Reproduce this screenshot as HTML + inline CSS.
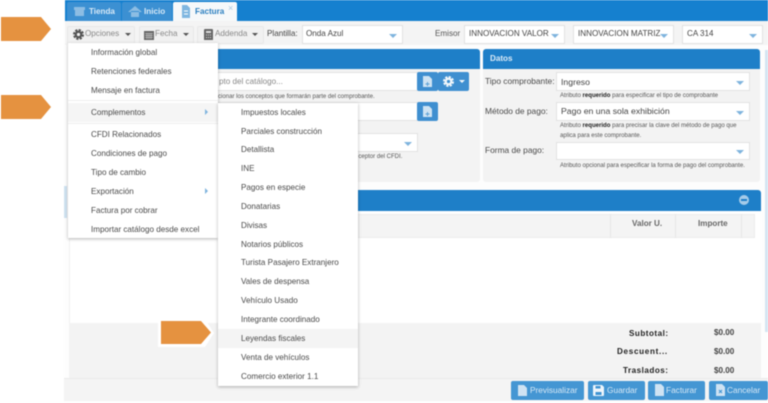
<!DOCTYPE html>
<html><head><meta charset="utf-8"><style>
html,body{margin:0;padding:0;background:#fff;width:768px;height:403px;overflow:hidden}
#r{position:relative;width:768px;height:403px;overflow:hidden;filter:blur(.5px);font-family:"Liberation Sans",sans-serif;font-size:8.1px;color:#444}
#r div,#r svg{position:absolute;box-sizing:border-box}
.t{white-space:nowrap;line-height:12px}
.btn{background:#f1f1f1;border:1px solid #e8e8e8;border-radius:2px}
.inp{background:#fff;border:1px solid #e2e2e2}
.sel{background:#fff;border:1px solid #e2e2e2}
.sel:after{content:"";position:absolute;right:5px;top:50%;margin-top:-1px;border:4px solid transparent;border-top:4px solid #7fb4de;border-bottom:0}
.h{background:#1e7fc8;color:#e4eff8;border-radius:3px 3px 0 0}
.mi{left:23px;margin-top:1px;white-space:nowrap;line-height:12px;color:#4a4a4a;font-size:8.1px}
.sm{font-size:6.05px;color:#555;white-space:nowrap;line-height:8px}
.bb{background:#4496d3;border-radius:2px;color:#d8e9f6;top:381px;height:19px;font-size:8.3px;line-height:19px}
.caret{width:0;height:0;border:3px solid transparent;border-top:3px solid #555;border-bottom:0}
.ar{background:#e59240;clip-path:polygon(0 0,80% 0,100% 50%,80% 100%,0 100%)}
.ib{background:#3f8fd0;border-radius:2px}
.lb{font-size:8.4px;color:#4a4a4a}
.v{font-size:8.7px;color:#444}
</style></head><body><div id="r">
<div style="left:64px;top:0;width:704px;height:402px;background:#fdfdfd"></div>
<div style="left:64px;top:186px;width:3px;height:32px;background:#cfe2f1"></div>
<div style="left:65px;top:0;width:703px;height:21px;background:#1580cf"></div>
<div style="left:65px;top:21px;width:703px;height:24px;background:#f4f4f4"></div>
<!-- tabs -->
<div style="left:67px;top:2px;width:54px;height:19px;background:#3c90d2;border-radius:2px 2px 0 0"></div>
<div style="left:122px;top:2px;width:50px;height:19px;background:#3c90d2;border-radius:2px 2px 0 0"></div>
<div style="left:173px;top:2px;width:64px;height:19px;background:#f6f8fa;border-radius:2px 2px 0 0"></div>
<svg style="left:73px;top:6px" width="13" height="11" viewBox="0 0 13 11"><path d="M1 1h11v3H1zM2 4h9v6H2z" fill="#8dbde3"/></svg>
<svg style="left:128px;top:6px" width="14" height="11" viewBox="0 0 14 11"><path d="M0 6L7 0l7 6M3 5v6h8V5" fill="#8dbde3"/></svg>
<svg style="left:181px;top:5px" width="10" height="13" viewBox="0 0 10 13"><path d="M1 0h5l3 3v10H1z" fill="#7fb6e0"/><path d="M3 6h4M3 9h4" stroke="#fff"/></svg>
<div class="t" style="left:89px;top:6px;color:#d9eaf7;font-weight:bold">Tienda</div>
<div class="t" style="left:144px;top:6px;color:#d9eaf7;font-weight:bold">Inicio</div>
<div class="t" style="left:195px;top:6px;color:#2b7fc0;font-weight:bold">Factura</div>
<div class="t" style="left:228px;top:2px;color:#a9c9e2;font-size:9px">×</div>
<!-- toolbar -->
<div class="btn" style="left:67px;top:26px;width:68px;height:18px"></div>
<div class="btn" style="left:139px;top:26px;width:55px;height:18px"></div>
<div class="btn" style="left:197px;top:26px;width:67px;height:18px"></div>
<svg style="left:73px;top:29px" width="11" height="11" viewBox="0 0 24 24"><circle cx="12" cy="12" r="6" fill="none" stroke="#555" stroke-width="5"/><circle cx="12" cy="12" r="10" fill="none" stroke="#555" stroke-width="4" stroke-dasharray="5 2.850"/></svg>
<div class="t" style="left:85px;top:28px;color:#888">Opciones</div>
<div class="caret" style="left:125px;top:33px"></div>
<svg style="left:144px;top:29px" width="10" height="11" viewBox="0 0 10 11"><path d="M0 2h10v9H0z" fill="#666"/><path d="M1 4.500h8M1 6.500h8M1 8.500h8M3 4v6M5 4v6M7 4v6" stroke="#ddd" stroke-width=".5"/></svg>
<div class="t" style="left:155px;top:28px;color:#888">Fecha</div>
<div class="caret" style="left:183px;top:33px"></div>
<svg style="left:204px;top:29px" width="9" height="11" viewBox="0 0 9 11"><path d="M0 1q0-1 1-1h7q1 0 1 1v10H0z" fill="#666"/><path d="M2 2h5v2H2z" fill="#ddd"/><path d="M2 6h5M2 8.500h5" stroke="#ddd" stroke-dasharray="1 1"/></svg>
<div class="t" style="left:215px;top:28px;color:#888">Addenda</div>
<div class="caret" style="left:252px;top:33px"></div>
<div class="t" style="left:267px;top:28px;color:#444">Plantilla:</div>
<div class="sel" style="left:302px;top:25px;width:101px;height:19px"></div>
<div class="t" style="left:306px;top:28px">Onda Azul</div>
<div class="t" style="left:435px;top:28px;color:#555">Emisor</div>
<div class="sel" style="left:464px;top:25px;width:101px;height:19px"></div>
<div class="t" style="left:469px;top:28px">INNOVACION VALOR</div>
<div class="sel" style="left:573px;top:25px;width:101px;height:19px"></div>
<div class="t" style="left:578px;top:28px">INNOVACION MATRIZ</div>
<div class="sel" style="left:682px;top:25px;width:81px;height:19px"></div>
<div class="t" style="left:687px;top:28px">CA 314</div>
<!-- panels -->
<div style="left:70px;top:49px;width:410px;height:133px;background:#f3f3f3;border-radius:3px"></div>
<div class="h" style="left:70px;top:49px;width:410px;height:20px"></div>
<div style="left:483px;top:49px;width:277px;height:133px;background:#f3f3f3;border-radius:3px"></div>
<div class="h" style="left:483px;top:49px;width:277px;height:20px"></div>
<div class="t" style="left:490px;top:53px;font-weight:bold;color:#dcebf7">Datos</div>
<div class="inp" style="left:200px;top:72px;width:218px;height:19px"></div>
<div class="t" style="left:219px;top:76px;color:#888">pto del catálogo...</div>
<div class="ib" style="left:417px;top:72px;width:21px;height:19px"></div>
<div class="ib" style="left:438px;top:72px;width:31px;height:19px"></div>
<svg style="left:423px;top:76px" width="9" height="11" viewBox="0 0 9 11"><path d="M0 0h6l3 3v8H0z" fill="#cfe3f3"/><path d="M2.500 8h4M4.500 6v4" stroke="#5ba0d6"/></svg>
<svg style="left:443px;top:76px" width="11" height="11" viewBox="0 0 24 24"><circle cx="12" cy="12" r="6" fill="none" stroke="#f2f7fb" stroke-width="5"/><circle cx="12" cy="12" r="10" fill="none" stroke="#f2f7fb" stroke-width="4" stroke-dasharray="5 2.850"/></svg>
<div class="caret" style="left:459px;top:80px;border-top-color:#f2f7fb"></div>
<div class="sm" style="left:218px;top:93px">cionar los conceptos que formarán parte del comprobante.</div>
<div class="inp" style="left:200px;top:102px;width:218px;height:19px"></div>
<div class="ib" style="left:417px;top:102px;width:21px;height:19px"></div>
<svg style="left:423px;top:106px" width="9" height="11" viewBox="0 0 9 11"><path d="M0 0h6l3 3v8H0z" fill="#cfe3f3"/><path d="M2.500 8h4M4.500 6v4" stroke="#5ba0d6"/></svg>
<div class="sel" style="left:200px;top:133px;width:218px;height:19px"></div>
<div class="sm" style="left:353px;top:153px">receptor del CFDI.</div>
<!-- datos -->
<div class="t lb" style="left:485px;top:75px">Tipo comprobante:</div>
<div class="sel" style="left:556px;top:72px;width:194px;height:19px"></div>
<div class="t v" style="left:561px;top:76px">Ingreso</div>
<div class="sm" style="left:560px;top:92px">Atributo <b style="color:#222">requerido</b> para especificar el tipo de comprobante</div>
<div class="t lb" style="left:485px;top:105px">Método de pago:</div>
<div class="sel" style="left:556px;top:102px;width:194px;height:19px"></div>
<div class="t v" style="left:561px;top:105px">Pago en una sola exhibición</div>
<div class="sm" style="left:560px;top:122px">Atributo <b style="color:#222">requerido</b> para precisar la clave del método de pago que</div>
<div class="sm" style="left:560px;top:132px">aplica para este comprobante.</div>
<div class="t lb" style="left:485px;top:144px">Forma de pago:</div>
<div class="sel" style="left:556px;top:142px;width:194px;height:18px"></div>
<div class="sm" style="left:560px;top:162px">Atributo opcional para especificar la forma de pago del comprobante.</div>
<!-- conceptos -->
<div class="h" style="left:69px;top:190px;width:692px;height:21px"></div>
<div style="left:739px;top:195px;width:10px;height:10px;border-radius:50%;background:#a5cbe9"></div>
<div style="left:741px;top:199px;width:6px;height:2px;background:#1e7fc8"></div>
<div style="left:69px;top:211px;width:692px;height:112px;background:#fff;border-left:1px solid #f1f1f1"></div>
<div style="left:70px;top:214px;width:685px;height:24px;background:#f4f4f4;border:1px solid #ececec"></div>
<div style="left:610px;top:214px;width:1px;height:24px;background:#e6e6e6"></div>
<div style="left:675px;top:214px;width:1px;height:24px;background:#e6e6e6"></div>
<div style="left:741px;top:214px;width:1px;height:24px;background:#e6e6e6"></div>
<div class="t" style="left:632px;top:218px;font-weight:bold;color:#666">Valor U.</div>
<div class="t" style="left:698px;top:218px;font-weight:bold;color:#666">Importe</div>
<div style="left:69px;top:323px;width:692px;height:55px;background:#f3f3f3"></div>
<div style="left:64px;top:378px;width:704px;height:23px;background:#f4f4f4;border-top:1px solid #ebebeb"></div>
<div class="t" style="left:629px;top:328px;font-weight:bold;color:#222;letter-spacing:.5px">Subtotal:</div>
<div class="t" style="left:617px;top:346px;font-weight:bold;color:#222;letter-spacing:.7px">Descuent...</div>
<div class="t" style="left:623px;top:365px;font-weight:bold;color:#222;letter-spacing:.5px">Traslados:</div>
<div class="t" style="left:714px;top:327px;font-weight:bold;color:#444">$0.00</div>
<div class="t" style="left:714px;top:346px;font-weight:bold;color:#444">$0.00</div>
<div class="t" style="left:714px;top:365px;font-weight:bold;color:#444">$0.00</div>
<!-- bottom buttons -->
<div class="bb" style="left:511px;width:73px;padding-left:19px">Previsualizar</div>
<div class="bb" style="left:588px;width:57px;padding-left:19px">Guardar</div>
<div class="bb" style="left:648px;width:57px;padding-left:18px">Facturar</div>
<div class="bb" style="left:709px;width:59px;padding-left:18px">Cancelar</div>
<svg style="left:518px;top:385px" width="9" height="11" viewBox="0 0 9 11"><path d="M0 0h6l3 3v8H0z" fill="#cfe3f3"/></svg>
<svg style="left:593px;top:385px" width="11" height="11" viewBox="0 0 11 11"><path d="M0 1q0-1 1-1h8l2 2v8q0 1-1 1H1q-1 0-1-1z" fill="#eef5fb"/><path d="M2.500 1h5v2.500h-5zM2.500 7h6v3h-6z" fill="#3f93d2"/></svg>
<svg style="left:655px;top:384px" width="9" height="12" viewBox="0 0 9 12"><path d="M0 0h6l3 3v9H0z" fill="#cfe3f3"/></svg>
<svg style="left:716px;top:384px" width="9" height="12" viewBox="0 0 9 12"><path d="M0 0h6l3 3v9H0z" fill="#cfe3f3"/><path d="M3 6l3 3M6 6l-3 3" stroke="#3f93d2"/></svg>
<!-- scrollbar -->
<div style="left:765px;top:50px;width:3px;height:282px;background:#d5e5f2"></div>
<!-- menu -->
<div style="left:68px;top:43px;width:150px;height:195px;background:#fff;box-shadow:0 1px 3px rgba(0,0,0,.3)">
<div class="mi" style="top:3px">Información global</div>
<div class="mi" style="top:22px">Retenciones federales</div>
<div class="mi" style="top:41px">Mensaje en factura</div>
<div style="left:0;top:57px;width:150px;height:1px;background:#eee"></div>
<div style="left:0;top:60px;width:150px;height:19px;background:#f5f5f5"></div>
<div class="mi" style="top:63px">Complementos</div>
<div style="left:137px;top:66px;width:0;height:0;border:3px solid transparent;border-left:3px solid #7fb4de;border-right:0"></div>
<div style="left:0;top:80px;width:150px;height:1px;background:#eee"></div>
<div class="mi" style="top:85px">CFDI Relacionados</div>
<div class="mi" style="top:104px">Condiciones de pago</div>
<div class="mi" style="top:123px">Tipo de cambio</div>
<div class="mi" style="top:142px">Exportación</div>
<div style="left:137px;top:145px;width:0;height:0;border:3px solid transparent;border-left:3px solid #7fb4de;border-right:0"></div>
<div class="mi" style="top:161px">Factura por cobrar</div>
<div class="mi" style="top:180px">Importar catálogo desde excel</div>
</div>
<!-- submenu -->
<div style="left:218px;top:103px;width:140px;height:283px;background:#fff;box-shadow:0 1px 3px rgba(0,0,0,.3)">
<div style="left:0;top:226px;width:140px;height:19px;background:#f4f4f4"></div>
<div class="mi" style="top:3px">Impuestos locales</div>
<div class="mi" style="top:22px">Parciales construcción</div>
<div class="mi" style="top:40px">Detallista</div>
<div class="mi" style="top:59px">INE</div>
<div class="mi" style="top:78px">Pagos en especie</div>
<div class="mi" style="top:97px">Donatarias</div>
<div class="mi" style="top:116px">Divisas</div>
<div class="mi" style="top:135px">Notarios públicos</div>
<div class="mi" style="top:153px">Turista Pasajero Extranjero</div>
<div class="mi" style="top:172px">Vales de despensa</div>
<div class="mi" style="top:191px">Vehículo Usado</div>
<div class="mi" style="top:210px">Integrante coordinado</div>
<div class="mi" style="top:229px">Leyendas fiscales</div>
<div class="mi" style="top:248px">Venta de vehículos</div>
<div class="mi" style="top:267px">Comercio exterior 1.1</div>
</div>
<!-- arrows -->
<div class="ar" style="left:1px;top:17px;width:50px;height:24px"></div>
<div class="ar" style="left:1px;top:95px;width:50px;height:24px"></div>
<div style="left:158px;top:319px;width:56px;height:28px;background:#fff;clip-path:polygon(0 0,84% 0,100% 50%,84% 100%,0 100%)"></div>
<div class="ar" style="left:161px;top:321px;width:50px;height:23px"></div>
</div></body></html>
